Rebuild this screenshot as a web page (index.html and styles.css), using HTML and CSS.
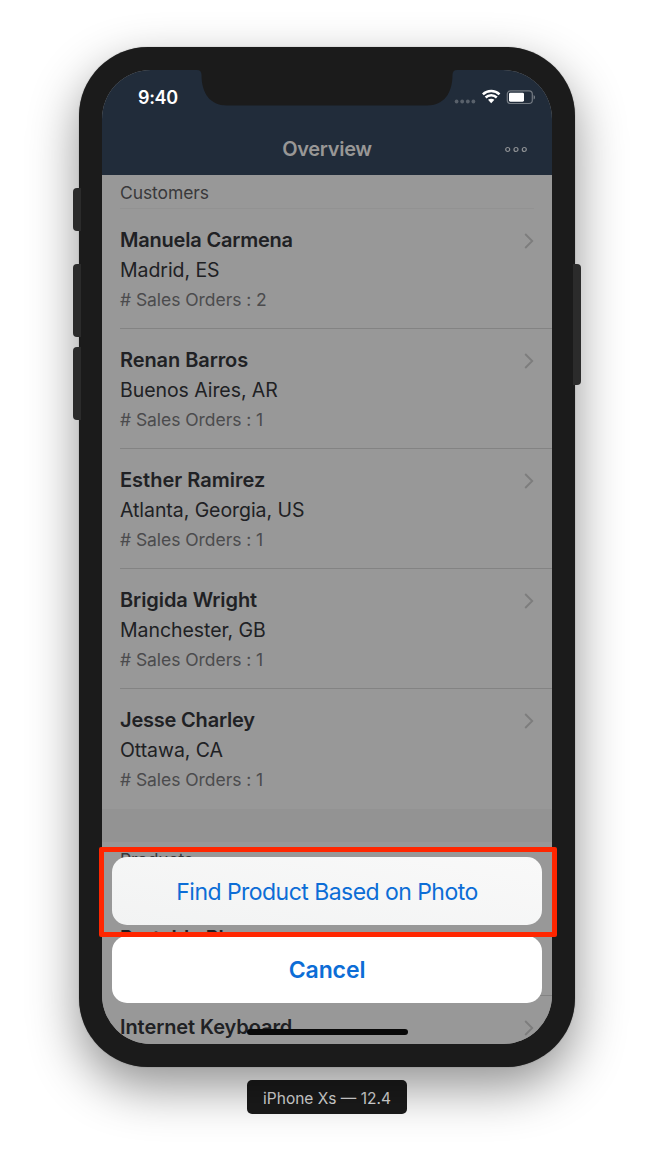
FILE: index.html
```html
<!DOCTYPE html>
<html lang="en">
<head>
<meta charset="utf-8">
<title>Overview</title>
<link rel="stylesheet" href="styles.css">
</head>
<body>
<main class="stage">
  <div class="phone">
    <span class="key key-mute"></span>
    <span class="key key-up"></span>
    <span class="key key-down"></span>
    <span class="key key-power"></span>
    <div class="screen">
      <header class="top">
        <div class="status">
          <span class="time">9:40</span>
          <svg class="status-icons" width="82" height="16" viewBox="0 0 82 16">
            <g fill="#59616b"><circle cx="3.6" cy="12.5" r="1.9"/><circle cx="9.2" cy="12.5" r="1.9"/><circle cx="14.8" cy="12.5" r="1.9"/><circle cx="20.4" cy="12.5" r="1.9"/></g>
            <g fill="none" stroke="#fff" stroke-width="2.5"><path d="M29.9 5.4C34.4 .9 42 .9 46.500 5.400"/><path d="M32.600 8.500C35.700 5.500 40.700 5.500 43.800 8.500"/></g>
            <path d="M35 10.700C36.700 9.300 39.700 9.300 41.400 10.700L38.200 14.200Z" fill="#fff"/>
            <rect x="54.300" y="1.900" width="25" height="12.600" rx="3.200" fill="none" stroke="#747b83" stroke-width="1.200"/>
            <rect x="56" y="3.700" width="15" height="9" rx="1.400" fill="#fff"/>
            <path d="M80.600 5.900c2 .8 2 3.900 0 4.700z" fill="#747b83"/>
          </svg>
        </div>
        <div class="nav">
          <h1 class="nav-title">Overview</h1>
          <svg class="more" width="24" height="8" viewBox="0 0 24 8" fill="none" stroke="#8e9194" stroke-width="1.200"><circle cx="3.700" cy="4.500" r="2"/><circle cx="12" cy="4.500" r="2"/><circle cx="20.300" cy="4.500" r="2"/></svg>
        </div>
        <svg class="notch" width="252" height="36" viewBox="0 0 252 36"><path d="M-4 0C-1 0 .5 1.500 .5 5C.5 23 9 35.500 26 35.500H226C243 35.500 251.500 23 251.500 5C251.500 1.500 253 0 256 0Z" fill="#1b1b1b"/></svg>
      </header>
      <section class="group">
        <h2 class="group-title">Customers</h2>
        <article class="cell"><div><h3 class="snug">Manuela Carmena</h3><p class="place">Madrid, ES</p><p class="orders"># Sales Orders : 2</p></div><svg class="chev" viewBox="0 0 10 16"><path d="M1.200 1L8.200 8L1.200 15"/></svg></article>
        <article class="cell"><div><h3>Renan Barros</h3><p class="place">Buenos Aires, AR</p><p class="orders"># Sales Orders : 1</p></div><svg class="chev" viewBox="0 0 10 16"><path d="M1.200 1L8.200 8L1.200 15"/></svg></article>
        <article class="cell"><div><h3 class="loose">Esther Ramirez</h3><p class="place">Atlanta, Georgia, US</p><p class="orders"># Sales Orders : 1</p></div><svg class="chev" viewBox="0 0 10 16"><path d="M1.200 1L8.200 8L1.200 15"/></svg></article>
        <article class="cell"><div><h3>Brigida Wright</h3><p class="place">Manchester, GB</p><p class="orders"># Sales Orders : 1</p></div><svg class="chev" viewBox="0 0 10 16"><path d="M1.200 1L8.200 8L1.200 15"/></svg></article>
        <article class="cell last"><div><h3 class="snug">Jesse Charley</h3><p class="place">Ottawa, CA</p><p class="orders"># Sales Orders : 1</p></div><svg class="chev" viewBox="0 0 10 16"><path d="M1.200 1L8.200 8L1.200 15"/></svg></article>
      </section>
      <section class="group products">
        <h2 class="group-title">Products</h2>
        <article class="cell short"><div><h3>Portable Player</h3></div></article>
        <article class="cell last"><div><h3>Internet Keyboard</h3></div><svg class="chev" viewBox="0 0 10 16"><path d="M1.200 1L8.200 8L1.200 15"/></svg></article>
      </section>
      <div class="sheet">
        <button class="action">Find Product Based on Photo</button>
        <button class="cancel">Cancel</button>
      </div>
      <span class="home"></span>
    </div>
    <span class="highlight"></span>
  </div>
  <div class="device">iPhone Xs — 12.4</div>
</main>
</body>
</html>
```
FILE: styles.css
```css
* { box-sizing: border-box; }
body { margin: 0; background: #fff; font-family: Inter, "Liberation Sans", sans-serif; }
h1, h2, h3, p { margin: 0; font-weight: 400; white-space: nowrap; }
.stage { height: 1157px; padding-top: 47px; display: flex; flex-direction: column; align-items: center; gap: 13px; overflow: hidden; }
.phone { position: relative; width: 496px; height: 1020px; padding: 23px; border-radius: 69px; background: #1b1b1b; box-shadow: 0 0 1px rgba(0,0,0,.5), 0 20px 50px rgba(0,0,0,.43); }
.screen { position: relative; width: 450px; height: 974px; border-radius: 49px; overflow: hidden; background: #939393; display: flex; flex-direction: column; }

/* Hardware keys and notch */
.key { position: absolute; width: 8px; border-radius: 4px 0 0 4px; background: #2b2b2b; left: -6px; }
.key-mute { top: 141px; height: 43px; }
.key-up { top: 217px; height: 73px; }
.key-down { top: 300px; height: 73px; }
.key-power { left: auto; right: -6px; top: 217px; height: 121px; border-radius: 0 4px 4px 0; }
.notch { position: absolute; left: 98.5px; top: 0; overflow: visible; }

/* Status and navigation bars */
.top { position: relative; flex: none; height: 105px; background: #212c3a; }
.status { display: flex; justify-content: space-between; height: 53px; align-items: center; padding: 2px 17.5px 0 36px; }
.status-icons { margin-bottom: 2px; }
.time { font-size: 18px; font-weight: 600; color: #fff; letter-spacing: -.35px; }
.nav { display: grid; grid-template-columns: 1fr auto 1fr; align-items: center; height: 52px; padding: 0 24px; }
.nav-title { grid-column: 2; font-size: 20px; font-weight: 600; color: #989796; letter-spacing: -.3px; }
.more { justify-self: end; }

/* Lists */
.group { flex: none; background: #989898; padding-left: 18px; }
.group-title { height: 34px; margin-right: 18px; font-size: 17.5px; line-height: 35px; color: #39393b; letter-spacing: -.1px; border-bottom: 1px solid #929292; }
.cell { height: 120px; padding: 16px 18px 0 0; display: flex; justify-content: space-between; align-items: flex-start; border-bottom: 1px solid #838383; }
.cell h3 { height: 30px; line-height: 30px; font-size: 20px; font-weight: 600; color: #202124; letter-spacing: -.08px; }
.cell .snug { letter-spacing: -.2px; }
.cell .loose { letter-spacing: 0; }
.place { height: 30px; line-height: 31px; font-size: 19.500px; color: #202124; letter-spacing: -.06px; }
.orders { height: 28px; line-height: 29px; font-size: 17.500px; color: #4b4b4d; letter-spacing: -.05px; }
.chev { width: 10px; height: 16px; margin-top: 8px; fill: none; stroke: #7d7d7d; stroke-width: 1.900; }
.last { border-bottom: 0; }
.products { margin-top: 33px; }
.short { padding-top: 47px; }

/* Action sheet */
.sheet { position: absolute; left: 10px; right: 10px; top: 787px; display: flex; flex-direction: column; gap: 11px; }
.sheet button { height: 68px; padding: 0; border: 0; border-radius: 15px; background: #fff; color: #0c6dd6; font: 400 23px Inter, sans-serif; }
.sheet .action { padding-top: 1px; letter-spacing: -.54px; background: linear-gradient(10deg, #f2f3f3, #f9f9f9); }
.sheet .cancel { height: 67px; font-weight: 600; letter-spacing: -.1px; }
.home { position: absolute; left: 145px; top: 958.5px; width: 160.5px; height: 6px; border-radius: 3px; background: #080808; }
.highlight { position: absolute; left: 20px; top: 800px; width: 458px; height: 90px; border: 5px solid #ff2600; border-radius: 2px; }
.device { width: 160px; height: 34px; border-radius: 5px; background: #1b1b1b; color: #dedede; font-size: 15.500px; line-height: 37px; text-align: center; }
```
